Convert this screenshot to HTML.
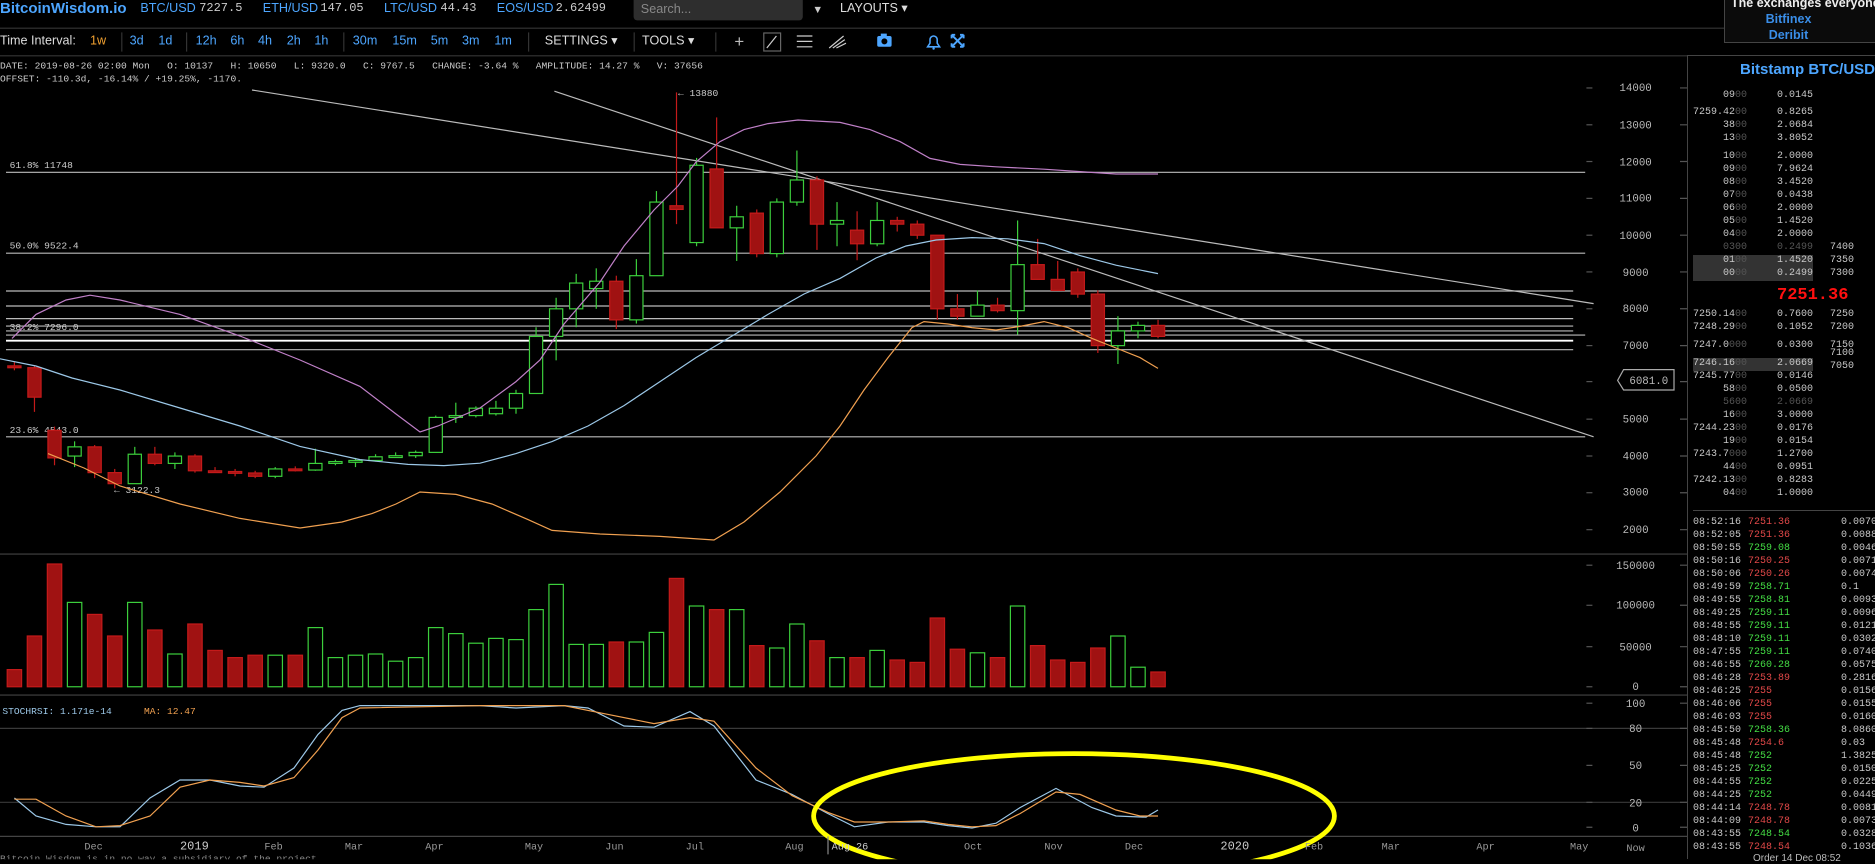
<!DOCTYPE html>
<html><head><meta charset="utf-8">
<style>
html,body{margin:0;padding:0;background:#000;width:1875px;height:859px;overflow:hidden;font-family:"Liberation Sans",sans-serif;color:#ccc}
#L{position:absolute;left:0;top:0;width:1406px;height:716px;transform:scale(1.2);transform-origin:0 0}
.a{position:absolute;white-space:nowrap}
.mono{font-family:"Liberation Mono",monospace}
.b{color:#4da6ff}
#R{position:absolute;left:1687px;top:0;width:188px;height:859px;font-family:"Liberation Mono",monospace;font-size:10px;color:#c8c8c8}
#R .row{position:absolute;left:0;width:188px;height:13px;line-height:13px}
#R .p{position:absolute;right:128px;text-align:right}
#R .m{position:absolute;right:62px;text-align:right}
#R .d{position:absolute;left:143px}
.dim{color:#555}
.t{position:absolute;left:6px}
.tp{position:absolute;left:61px}
.ta{position:absolute;left:154px}
.rd{color:#e04848}.gr{color:#44dd44}
</style></head><body>
<div id="L">
  <div class="a" style="left:0;top:0;font-size:12.5px;font-weight:bold;color:#4da6ff;line-height:15px">BitcoinWisdom.io</div>
  <div class="a" style="left:117px;top:1px;font-size:10.5px;line-height:13px"><span class="b">BTC/USD</span></div>
  <div class="a mono" style="left:166px;top:1px;font-size:10px;line-height:13px">7227.5</div>
  <div class="a" style="left:219px;top:1px;font-size:10.5px;line-height:13px"><span class="b">ETH/USD</span></div>
  <div class="a mono" style="left:267px;top:1px;font-size:10px;line-height:13px">147.05</div>
  <div class="a" style="left:320px;top:1px;font-size:10.5px;line-height:13px"><span class="b">LTC/USD</span></div>
  <div class="a mono" style="left:367px;top:1px;font-size:10px;line-height:13px">44.43</div>
  <div class="a" style="left:414px;top:1px;font-size:10.5px;line-height:13px"><span class="b">EOS/USD</span></div>
  <div class="a mono" style="left:463px;top:1px;font-size:10px;line-height:13px">2.62499</div>
  <div class="a" style="left:528px;top:0;width:141px;height:17px;background:#2e2e2e;border-radius:0 0 3px 3px"></div>
  <div class="a" style="left:534px;top:1px;font-size:10.5px;color:#888;line-height:15px">Search...</div>
  <div class="a" style="left:677px;top:1px;font-size:9px;color:#ccc;line-height:15px">▼</div>
  <div class="a" style="left:700px;top:1px;font-size:10.5px;color:#ddd;line-height:13px">LAYOUTS ▾</div>
  <div class="a" style="left:0;top:23px;width:1437px;height:1px;background:#333"></div>
  <div class="a" style="left:0;top:45.5px;width:1406px;height:1px;background:#333"></div>
  <div class="a" style="left:0;top:28px;font-size:10.5px;line-height:13px;color:#ddd">Time Interval:</div>
  <div class="a" style="left:75px;top:28px;font-size:10.5px;line-height:13px;color:#f0a030">1w</div>
  <div class="a" style="left:101px;top:27px;width:1px;height:16px;background:#333"></div>
  <div class="a b" style="left:108px;top:28px;font-size:10.5px;line-height:13px">3d</div>
  <div class="a b" style="left:132px;top:28px;font-size:10.5px;line-height:13px">1d</div>
  <div class="a" style="left:155px;top:27px;width:1px;height:16px;background:#333"></div>
  <div class="a b" style="left:163px;top:28px;font-size:10.5px;line-height:13px">12h</div>
  <div class="a b" style="left:192px;top:28px;font-size:10.5px;line-height:13px">6h</div>
  <div class="a b" style="left:215px;top:28px;font-size:10.5px;line-height:13px">4h</div>
  <div class="a b" style="left:239px;top:28px;font-size:10.5px;line-height:13px">2h</div>
  <div class="a b" style="left:262px;top:28px;font-size:10.5px;line-height:13px">1h</div>
  <div class="a" style="left:286px;top:27px;width:1px;height:16px;background:#333"></div>
  <div class="a b" style="left:294px;top:28px;font-size:10.5px;line-height:13px">30m</div>
  <div class="a b" style="left:327px;top:28px;font-size:10.5px;line-height:13px">15m</div>
  <div class="a b" style="left:359px;top:28px;font-size:10.5px;line-height:13px">5m</div>
  <div class="a b" style="left:385px;top:28px;font-size:10.5px;line-height:13px">3m</div>
  <div class="a b" style="left:412px;top:28px;font-size:10.5px;line-height:13px">1m</div>
  <div class="a" style="left:440px;top:27px;width:1px;height:16px;background:#333"></div>
  <div class="a" style="left:454px;top:28px;font-size:10.5px;line-height:13px;color:#ddd">SETTINGS ▾</div>
  <div class="a" style="left:528px;top:27px;width:1px;height:16px;background:#333"></div>
  <div class="a" style="left:535px;top:28px;font-size:10.5px;line-height:13px;color:#ddd">TOOLS ▾</div>
  <div class="a" style="left:596px;top:27px;width:1px;height:16px;background:#333"></div>
  <div class="a" style="left:612px;top:26px;font-size:14px;line-height:16px;color:#bbb">+</div>
  <div class="a" style="left:636px;top:27px;width:13px;height:14px;border:1px solid #666"></div>
  <svg class="a" style="left:0;top:0" width="830" height="46">
    <line x1="639" y1="40" x2="647" y2="30" stroke="#ccc"/>
    <g stroke="#ccc"><line x1="664" y1="30" x2="677" y2="30"/><line x1="664" y1="34.5" x2="677" y2="34.5"/><line x1="664" y1="39" x2="677" y2="39"/></g>
    <g stroke="#ccc" fill="none"><path d="M691 40 L703 30 M694 40 L704 33 M697 40 L705 36"/></g>
    <rect x="731" y="30" width="12" height="9" rx="1.5" fill="#4da6ff"/><circle cx="737" cy="34.5" r="2.5" fill="#000"/><rect x="734" y="28" width="5" height="2" fill="#4da6ff"/>
    <path d="M773 39 L783 39 L781 36 L781 33 A3 3 0 0 0 775 33 L775 36 Z" fill="none" stroke="#4da6ff" stroke-width="1.3"/><circle cx="778" cy="40.5" r="1" fill="#4da6ff"/>
    <g stroke="#4da6ff" stroke-width="1.6"><path d="M793 29 L803 39 M803 29 L793 39"/><path d="M793 29 h3 M793 29 v3 M803 29 h-3 M803 29 v3 M793 39 h3 M793 39 v-3 M803 39 h-3 M803 39 v-3"/></g>
  </svg>
  <div class="a mono" style="left:0;top:50px;font-size:8px;line-height:11px;color:#ccc">DATE: 2019-08-26 02:00 Mon&nbsp;&nbsp; O: 10137&nbsp;&nbsp; H: 10650&nbsp;&nbsp; L: 9320.0&nbsp;&nbsp; C: 9767.5&nbsp;&nbsp; CHANGE: -3.64 %&nbsp;&nbsp; AMPLITUDE: 14.27 %&nbsp;&nbsp; V: 37656</div>
  <div class="a mono" style="left:0;top:60.5px;font-size:8px;line-height:11px;color:#ccc">OFFSET: -110.3d, -16.14% / +19.25%, -1170.</div>

  <svg id="chart" class="a" style="left:0;top:0" width="1406" height="716" font-family="Liberation Mono, monospace" font-size="9">
    <g id="grid" stroke="#555" stroke-width="1">
      <line x1="0" y1="461.7" x2="1406" y2="461.7" stroke="#444"/>
      <line x1="0" y1="579.2" x2="1406" y2="579.2" stroke="#444"/>
      <line x1="0" y1="607" x2="1406" y2="607" stroke="#3a3a3a"/>
      <line x1="0" y1="668.6" x2="1406" y2="668.6" stroke="#3a3a3a"/>
      <line x1="0" y1="697" x2="1406" y2="697" stroke="#444"/>
    </g>
    <g stroke="#bbb" stroke-width="1">
      <line x1="5" y1="143.6" x2="1321" y2="143.6"/>
      <line x1="5" y1="211" x2="1321" y2="211"/>
      <line x1="5" y1="242.5" x2="1311" y2="242.5"/>
      <line x1="5" y1="255" x2="1311" y2="255"/>
      <line x1="5" y1="265.5" x2="1311" y2="265.5"/>
      <line x1="5" y1="271.7" x2="1311" y2="271.7"/>
      <line x1="5" y1="275.8" x2="1311" y2="275.8"/>
      <line x1="5" y1="279.2" x2="1321" y2="279.2"/>
      <line x1="5" y1="283.9" x2="1311" y2="283.9" stroke="#fff" stroke-width="1.6"/>
      <line x1="5" y1="291.4" x2="1311" y2="291.4"/>
      <line x1="5" y1="364" x2="1321" y2="364"/>
      <line x1="210" y1="75" x2="1328" y2="253"/>
      <line x1="462" y1="76" x2="1328" y2="364"/>
    </g>
    <g fill="#ccc" font-size="8">
      <text x="8" y="140">61.8% 11748</text>
      <text x="8" y="207">50.0% 9522.4</text>
      <text x="8" y="275">38.2% 7296.0</text>
      <text x="8" y="361">23.6% 4543.0</text>
      <text x="565" y="80">← 13880</text>
      <text x="95" y="411">← 3122.3</text>
      <text x="2" y="595" fill="#9cc8e8">STOCHRSI: 1.171e-14</text>
      <text x="120" y="595" fill="#f0a050">MA: 12.47</text>
    </g>
    <g id="cnd"></g>
    <g id="vol"></g>
    <g fill="none" stroke-width="1">
      <polyline stroke="#c080c8" points="10,282 30,262 55,250 75,246 100,250 150,262 200,280 250,300 300,322 330,345 350,360 365,355 400,340 430,318 450,300 470,270 500,235 520,205 545,175 565,155 580,135 600,118 620,108 640,103 665,100 700,102 725,108 750,118 775,132 800,137 830,139 870,141 900,143 930,145 965,145"/>
      <polyline stroke="#9cc8e8" points="0,299 30,305 60,315 100,325 150,340 200,355 250,372 300,383 340,387 370,388 400,386 430,378 460,368 490,355 520,338 550,318 580,298 610,280 640,262 670,245 700,232 730,215 755,205 780,200 810,198 840,199 870,203 900,213 930,221 965,228"/>
      <polyline stroke="#f0a050" points="40,378 70,390 100,405 150,420 200,432 250,440 285,435 310,428 330,420 350,410 380,412 410,420 440,433 460,442 500,445 550,447 595,450 620,435 650,410 680,380 700,355 720,325 740,298 760,273 770,268 790,270 810,273 830,275 850,272 870,268 890,273 910,282 930,290 950,298 965,307"/>
      <polyline stroke="#9cc8e8" points="12,665 30,680 55,687 80,689 100,689 125,665 150,650 175,650 200,655 220,656 245,640 265,612 285,592 300,588 340,588 400,588 430,590 470,588 490,590 520,605 545,606 575,593 595,605 630,650 660,662 690,678 712,689 740,685 770,685 790,688 810,690 830,686 850,673 880,657 910,673 930,680 955,681 965,675"/>
      <polyline stroke="#f0a050" points="12,666 30,666 55,680 80,689 100,688 125,680 150,656 175,650 200,652 220,655 245,648 265,625 285,598 300,590 400,588 470,588 500,594 545,603 575,598 595,601 630,640 660,663 690,677 712,685 740,685 770,684 790,687 810,689 830,688 850,678 880,660 900,662 930,675 950,680 965,680"/>
    </g>
    <ellipse cx="895" cy="680" rx="217" ry="52" fill="none" stroke="#ffff00" stroke-width="4"/>
    <g id="ticks" stroke="#555"></g>
    <g fill="#bbb" text-anchor="middle">
      <text x="1363" y="76">14000</text><text x="1363" y="107">13000</text><text x="1363" y="138">12000</text>
      <text x="1363" y="168">11000</text><text x="1363" y="199">10000</text><text x="1363" y="230">9000</text>
      <text x="1363" y="260">8000</text><text x="1363" y="291">7000</text><text x="1363" y="352">5000</text>
      <text x="1363" y="383">4000</text><text x="1363" y="413">3000</text><text x="1363" y="444">2000</text>
      <text x="1363" y="474">150000</text><text x="1363" y="507">100000</text><text x="1363" y="542">50000</text>
      <text x="1363" y="575">0</text><text x="1363" y="589">100</text><text x="1363" y="610">80</text>
      <text x="1363" y="641">50</text><text x="1363" y="672">20</text><text x="1363" y="693">0</text>
    </g>
    <path d="M1348 317 L1353 308 L1395 308 L1395 325 L1353 325 Z" fill="#000" stroke="#aaa"/>
    <text x="1374" y="320" fill="#bbb" text-anchor="middle">6081.0</text>
    <g fill="#999" text-anchor="middle" font-size="8.5">
      <text x="78" y="708">Dec</text><text x="162" y="708" fill="#ccc" font-size="10">2019</text>
      <text x="228" y="708">Feb</text><text x="295" y="708">Mar</text><text x="362" y="708">Apr</text>
      <text x="445" y="708">May</text><text x="512" y="708">Jun</text><text x="579" y="708">Jul</text>
      <text x="662" y="708">Aug</text><text x="811" y="708">Oct</text><text x="878" y="708">Nov</text>
      <text x="945" y="708">Dec</text><text x="1029" y="708" fill="#ccc" font-size="10">2020</text>
      <text x="1095" y="708">Feb</text><text x="1159" y="708">Mar</text><text x="1238" y="708">Apr</text>
      <text x="1316" y="708">May</text><text x="1363" y="709">Now</text>
    </g>
    <line x1="690" y1="697" x2="690" y2="712" stroke="#888"/>
    <text x="693" y="708" fill="#ccc" font-size="8.5">Aug 26</text>
    <text x="0" y="718" fill="#888" font-size="8">Bitcoin Wisdom is in no way a subsidiary of the project</text>
  </svg>
</div>

<div id="R">
  <div style="position:absolute;left:0;top:55px;width:188px;height:1px;background:#444"></div>
  <div style="position:absolute;left:0;top:55px;width:1px;height:804px;background:#444"></div>
  <div style="position:absolute;left:37px;top:-2px;width:160px;height:43px;background:#0b0b0b;border:1px solid #444;font-family:'Liberation Sans',sans-serif;font-weight:bold;font-size:12.5px;text-align:center;line-height:16px">
    <div style="color:#eee;margin-top:-4px;white-space:nowrap;text-align:left;padding-left:6px">The exchanges everyone</div>
    <div style="color:#3a8ee8;margin-left:-33px">Bitfinex</div>
    <div style="color:#3a8ee8;margin-left:-33px">Deribit</div>
  </div>
  <div style="position:absolute;left:53px;top:61px;font-family:'Liberation Sans',sans-serif;font-weight:bold;font-size:15px;color:#4da6ff;white-space:nowrap">Bitstamp BTC/USD</div>
  <div style="position:absolute;left:6px;top:255px;width:120px;height:26px;background:#333"></div>
  <div style="position:absolute;left:6px;top:358px;width:120px;height:13px;background:#333"></div>
  <div class="row" style="top:89px"><span class="p">09<span class="dim">00</span></span><span class="m">0.0145</span></div>
  <div class="row" style="top:106px"><span class="p">7259.42<span class="dim">00</span></span><span class="m">0.8265</span></div>
  <div class="row" style="top:119px"><span class="p">38<span class="dim">00</span></span><span class="m">2.0684</span></div>
  <div class="row" style="top:132px"><span class="p">13<span class="dim">00</span></span><span class="m">3.8052</span></div>
  <div class="row" style="top:150px"><span class="p">10<span class="dim">00</span></span><span class="m">2.0000</span></div>
  <div class="row" style="top:163px"><span class="p">09<span class="dim">00</span></span><span class="m">7.9624</span></div>
  <div class="row" style="top:176px"><span class="p">08<span class="dim">00</span></span><span class="m">3.4520</span></div>
  <div class="row" style="top:189px"><span class="p">07<span class="dim">00</span></span><span class="m">0.0438</span></div>
  <div class="row" style="top:202px"><span class="p">06<span class="dim">00</span></span><span class="m">2.0000</span></div>
  <div class="row" style="top:215px"><span class="p">05<span class="dim">00</span></span><span class="m">1.4520</span></div>
  <div class="row" style="top:228px"><span class="p">04<span class="dim">00</span></span><span class="m">2.0000</span></div>
  <div class="row" style="top:241px"><span class="p dim">0300</span><span class="m dim">0.2499</span><span class="d">7400</span></div>
  <div class="row" style="top:254px"><span class="p">01<span class="dim">00</span></span><span class="m">1.4520</span><span class="d">7350</span></div>
  <div class="row" style="top:267px"><span class="p">00<span class="dim">00</span></span><span class="m">0.2499</span><span class="d">7300</span></div>
  <div style="position:absolute;left:90px;top:287px;font-size:17px;font-weight:bold;color:#ff1010;line-height:18px">7251.36</div>
  <div class="row" style="top:308px"><span class="p">7250.14<span class="dim">00</span></span><span class="m">0.7600</span><span class="d">7250</span></div>
  <div class="row" style="top:321px"><span class="p">7248.29<span class="dim">00</span></span><span class="m">0.1052</span><span class="d">7200</span></div>
  <div class="row" style="top:339px"><span class="p">7247.0<span class="dim">000</span></span><span class="m">0.0300</span><span class="d">7150</span></div>
  <div class="row" style="top:347px"><span class="d">7100</span></div>
  <div class="row" style="top:357px"><span class="p">7246.16<span class="dim">00</span></span><span class="m">2.0669</span></div>
  <div class="row" style="top:360px"><span class="d">7050</span></div>
  <div class="row" style="top:370px"><span class="p">7245.77<span class="dim">00</span></span><span class="m">0.0146</span></div>
  <div class="row" style="top:383px"><span class="p">58<span class="dim">00</span></span><span class="m">0.0500</span></div>
  <div class="row" style="top:396px"><span class="p dim">5600</span><span class="m dim">2.0669</span></div>
  <div class="row" style="top:409px"><span class="p">16<span class="dim">00</span></span><span class="m">3.0000</span></div>
  <div class="row" style="top:422px"><span class="p">7244.23<span class="dim">00</span></span><span class="m">0.0176</span></div>
  <div class="row" style="top:435px"><span class="p">19<span class="dim">00</span></span><span class="m">0.0154</span></div>
  <div class="row" style="top:448px"><span class="p">7243.7<span class="dim">000</span></span><span class="m">1.2700</span></div>
  <div class="row" style="top:461px"><span class="p">44<span class="dim">00</span></span><span class="m">0.0951</span></div>
  <div class="row" style="top:474px"><span class="p">7242.13<span class="dim">00</span></span><span class="m">0.8283</span></div>
  <div class="row" style="top:487px"><span class="p">04<span class="dim">00</span></span><span class="m">1.0000</span></div>
  <div style="position:absolute;left:6px;top:510px;width:182px;height:1px;background:#444"></div>
  <div id="trades">
  <div class="row" style="top:516px"><span class="t">08:52:16</span><span class="tp rd">7251.36</span><span class="ta">0.0070</span></div>
  <div class="row" style="top:529px"><span class="t">08:52:05</span><span class="tp rd">7251.36</span><span class="ta">0.0088</span></div>
  <div class="row" style="top:542px"><span class="t">08:50:55</span><span class="tp gr">7259.08</span><span class="ta">0.0046</span></div>
  <div class="row" style="top:555px"><span class="t">08:50:16</span><span class="tp rd">7250.25</span><span class="ta">0.0071</span></div>
  <div class="row" style="top:568px"><span class="t">08:50:06</span><span class="tp rd">7250.26</span><span class="ta">0.0074</span></div>
  <div class="row" style="top:581px"><span class="t">08:49:59</span><span class="tp gr">7258.71</span><span class="ta">0.1</span></div>
  <div class="row" style="top:594px"><span class="t">08:49:55</span><span class="tp gr">7258.81</span><span class="ta">0.0093</span></div>
  <div class="row" style="top:607px"><span class="t">08:49:25</span><span class="tp gr">7259.11</span><span class="ta">0.0096</span></div>
  <div class="row" style="top:620px"><span class="t">08:48:55</span><span class="tp gr">7259.11</span><span class="ta">0.0121</span></div>
  <div class="row" style="top:633px"><span class="t">08:48:10</span><span class="tp gr">7259.11</span><span class="ta">0.0302</span></div>
  <div class="row" style="top:646px"><span class="t">08:47:55</span><span class="tp gr">7259.11</span><span class="ta">0.0740</span></div>
  <div class="row" style="top:659px"><span class="t">08:46:55</span><span class="tp gr">7260.28</span><span class="ta">0.0575</span></div>
  <div class="row" style="top:672px"><span class="t">08:46:28</span><span class="tp rd">7253.89</span><span class="ta">0.2816</span></div>
  <div class="row" style="top:685px"><span class="t">08:46:25</span><span class="tp rd">7255</span><span class="ta">0.0156</span></div>
  <div class="row" style="top:698px"><span class="t">08:46:06</span><span class="tp rd">7255</span><span class="ta">0.0155</span></div>
  <div class="row" style="top:711px"><span class="t">08:46:03</span><span class="tp rd">7255</span><span class="ta">0.0160</span></div>
  <div class="row" style="top:724px"><span class="t">08:45:50</span><span class="tp gr">7258.36</span><span class="ta">8.0860</span></div>
  <div class="row" style="top:737px"><span class="t">08:45:48</span><span class="tp rd">7254.6</span><span class="ta">0.03</span></div>
  <div class="row" style="top:750px"><span class="t">08:45:48</span><span class="tp gr">7252</span><span class="ta">1.3825</span></div>
  <div class="row" style="top:763px"><span class="t">08:45:25</span><span class="tp gr">7252</span><span class="ta">0.0150</span></div>
  <div class="row" style="top:776px"><span class="t">08:44:55</span><span class="tp gr">7252</span><span class="ta">0.0225</span></div>
  <div class="row" style="top:789px"><span class="t">08:44:25</span><span class="tp gr">7252</span><span class="ta">0.0449</span></div>
  <div class="row" style="top:802px"><span class="t">08:44:14</span><span class="tp rd">7248.78</span><span class="ta">0.0081</span></div>
  <div class="row" style="top:815px"><span class="t">08:44:09</span><span class="tp rd">7248.78</span><span class="ta">0.0073</span></div>
  <div class="row" style="top:828px"><span class="t">08:43:55</span><span class="tp gr">7248.54</span><span class="ta">0.0328</span></div>
  <div class="row" style="top:841px"><span class="t">08:43:55</span><span class="tp rd">7248.54</span><span class="ta">0.1036</span></div>
  </div>
  <div style="position:absolute;left:66px;top:853px;font-family:'Liberation Sans',sans-serif;font-size:10px;color:#bbb;white-space:nowrap">Order 14 Dec 08:52</div>
</div>

<script>
var C=[[6450,6560,6330,6400],[6400,6460,5200,5600],[4700,4800,3750,3950],[4000,4400,3700,4250],[4250,4300,3400,3550],[3550,3650,3122,3250],[3250,4250,3250,4050],[4050,4250,3750,3800],[3800,4100,3650,4000],[4000,4050,3550,3600],[3600,3700,3550,3580],[3580,3650,3450,3540],[3540,3600,3400,3450],[3450,3700,3400,3650],[3650,3720,3580,3620],[3620,4200,3600,3800],[3800,3900,3750,3850],[3850,3950,3700,3880],[3880,4050,3850,3980],[3980,4100,3950,4010],[4010,4150,3950,4100],[4100,5100,4100,5050],[5050,5450,4900,5100],[5100,5350,5050,5300],[5150,5500,5100,5300],[5300,5800,5150,5700],[5700,7500,5700,7250],[7250,8300,6600,8000],[8000,8950,7500,8700],[8550,9100,8000,8750],[8750,8900,7450,7700],[7700,9350,7600,8900],[8900,11200,8900,10900],[10800,13880,10300,10700],[9800,12100,9700,11900],[11800,13200,11000,10200],[10200,10800,9300,10500],[10600,10700,9400,9500],[9500,11000,9400,10900],[10900,12300,10800,11500],[11500,11600,9600,10300],[10300,10900,9700,10400],[10137,10650,9320,9767],[9767,10900,9700,10400],[10400,10500,10100,10300],[10300,10400,9900,10000],[10000,10000,7700,8000],[8000,8400,7700,7800],[7800,8500,7800,8100],[8100,8300,7900,7950],[7950,10400,7300,9200],[9200,9900,8800,8800],[8800,9300,8500,8500],[9000,9100,8300,8400],[8400,8500,6800,7000],[7000,7800,6500,7400],[7400,7650,7200,7550],[7550,7700,7200,7250]];
var V=[558,530,470,502,512,530,502,525,545,520,542,548,546,546,546,523,548,546,545,551,548,523,528,536,532,533,508,487,537,537,535,535,527,482,505,508,508,538,540,520,534,548,548,542,550,552,515,541,544,548,505,538,550,552,540,530,556,560];
function y(p){return 73.3+(14000-p)*0.030675;}
var ns="http://www.w3.org/2000/svg",g=document.getElementById('cnd'),vg=document.getElementById('vol');
function el(t,a,par){var e=document.createElementNS(ns,t);for(var k in a)e.setAttribute(k,a[k]);par.appendChild(e);return e;}
for(var i=0;i<C.length;i++){var c=C[i],x=12+i*16.72,red=c[3]<c[0];
 var col=red?'#c41a1a':'#3ccf3c';
 el('line',{x1:x,x2:x,y1:y(c[1]),y2:y(c[2]),stroke:col},g);
 var t=y(Math.max(c[0],c[3])),b=y(Math.min(c[0],c[3]));if(b-t<1.5)b=t+1.5;
 el('rect',{x:x-5.5,y:t,width:11,height:b-t,fill:red?'#a01212':'#000',stroke:col},g);
 el('rect',{x:x-6,y:V[i],width:12,height:572.3-V[i],fill:red?'#a01212':'#000',stroke:col},vg);}
var tk=document.getElementById('ticks');
[73.3,104,134.6,165.3,196,226.6,257.3,288,349.3,380,410.6,441.4,471,504.4,538.9,572.3,586,607,637.8,668.6,689.4,318].forEach(function(v){el('line',{x1:1322,x2:1327,y1:v,y2:v},tk);el('line',{x1:1400,x2:1406,y1:v,y2:v},tk);});
</script>
</body></html>
